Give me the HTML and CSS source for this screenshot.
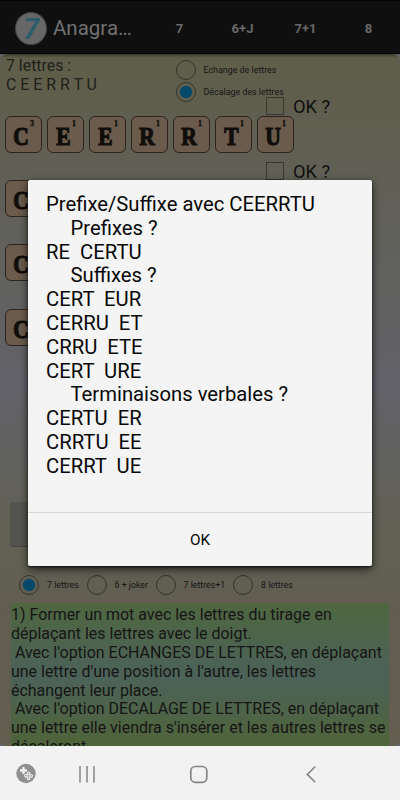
FILE: index.html
```html
<!DOCTYPE html>
<html lang="fr">
<head>
<meta charset="utf-8">
<title>Anagrammes</title>
<link rel="stylesheet" href="styles.css">
</head>
<body>
<div class="screen">
  <header class="bar">
    <div class="logo">7</div>
    <h1 class="title">Anagra…</h1>
    <nav class="menu"><span>7</span><span>6+J</span><span>7+1</span><span>8</span></nav>
  </header>
  <main class="game">
    <section class="top">
      <div class="draw"><div>7 lettres :</div><div class="letters">C E E R R T U</div></div>
      <div class="modes">
        <div class="option"><i class="radio"></i><span>Echange de lettres</span></div>
        <div class="option"><i class="radio on"></i><span>Décalage des lettres</span></div>
      </div>
    </section>
    <section class="row">
      <div class="check"><i class="box"></i><span>OK ?</span></div>
      <div class="tiles">
        <div class="tile"><b>C</b><sup>3</sup></div><div class="tile"><b>E</b><sup>1</sup></div><div class="tile"><b>E</b><sup>1</sup></div><div class="tile"><b>R</b><sup>1</sup></div><div class="tile"><b>R</b><sup>1</sup></div><div class="tile"><b>T</b><sup>1</sup></div><div class="tile"><b>U</b><sup>1</sup></div>
      </div>
    </section>
    <section class="row">
      <div class="check"><i class="box"></i><span>OK ?</span></div>
      <div class="tiles"><div class="tile"><b>C</b></div></div>
    </section>
    <section class="row"><div class="check"></div><div class="tiles"><div class="tile"><b>C</b></div></div></section>
    <section class="row"><div class="check"></div><div class="tiles"><div class="tile"><b>C</b></div></div></section>
    <div class="button"></div>
    <div class="counts">
      <div class="count"><i class="radio on"></i><span>7 lettres</span></div>
      <div class="count"><i class="radio"></i><span>6 + joker</span></div>
      <div class="count"><i class="radio"></i><span>7 lettres+1</span></div>
      <div class="count"><i class="radio"></i><span>8 lettres</span></div>
    </div>
    <div class="help">1) Former un mot avec les lettres du tirage en
déplaçant les lettres avec le doigt.
 Avec l'option ECHANGES DE LETTRES, en déplaçant
une lettre d'une position à l'autre, les lettres
échangent leur place.
 Avec l'option DECALAGE DE LETTRES, en déplaçant
une lettre elle viendra s'insérer et les autres lettres se
décaleront.</div>
  </main>
  <footer class="nav">
    <svg width="400" height="54" viewBox="0 0 400 54">
      <circle cx="26" cy="27.500" r="9.700" fill="#909090"/>
      <path d="M23.500 21v7M20 24.500h7" stroke="#f2f2f2" stroke-width="2.300"/>
      <g fill="none" stroke="#f2f2f2" stroke-width="1.100"><circle cx="28.600" cy="27.300" r="1.300"/><circle cx="31.200" cy="29.800" r="1.300"/><circle cx="26" cy="29.800" r="1.300"/><circle cx="28.600" cy="32.300" r="1.300"/></g>
      <path d="M80 20v16.500M87 20v16.500M94 20v16.500" stroke="#858585" stroke-width="1.500"/>
      <rect x="190.800" y="20.500" width="16" height="15.800" rx="4.500" fill="none" stroke="#858585" stroke-width="1.700"/>
      <path d="M315.300 20.500l-8 7.900 8 7.900" fill="none" stroke="#858585" stroke-width="1.600"/>
    </svg>
  </footer>
  <div class="dialog">
    <div class="message"><p>Prefixe/Suffixe avec CEERRTU</p><p class="head">Prefixes ?</p><p>RE  CERTU</p><p class="head">Suffixes ?</p><p>CERT  EUR</p><p>CERRU  ET</p><p>CRRU  ETE</p><p>CERT  URE</p><p class="head">Terminaisons verbales ?</p><p>CERTU  ER</p><p>CRRTU  EE</p><p>CERRT  UE</p></div>
    <div class="ok">OK</div>
  </div>
</div>
</body>
</html>
```
FILE: styles.css
```css
* { box-sizing: border-box; }
body { margin: 0; font-family: Roboto, sans-serif; color: #151515; }
p, h1 { margin: 0; }
.screen { position: relative; width: 400px; height: 800px; overflow: hidden; display: flex; flex-direction: column; background: #626268; }
.bar { height: 54px; flex: none; display: flex; align-items: center; padding: 2px 0 0 15px; background: #0f0f0f; border-top: 1px solid #040404; border-bottom: 1px solid #000; }
.logo { flex: none; width: 32px; height: 33px; border-radius: 50%; background: #676767; border: 1px solid #444; color: #2d5c6b; font: italic 700 29px/32px Roboto, sans-serif; text-align: center; }
.title { flex: none; margin-left: 6px; width: 95px; font-size: 20.500px; font-weight: 400; color: #717171; white-space: nowrap; }
.menu { display: flex; color: #686868; font-size: 13px; font-weight: 700; }
.menu span { flex: none; width: 63px; text-align: center; }
.game { height: 692px; flex: none; overflow: hidden; border-radius: 7px; background: linear-gradient(rgba(0,0,0,.35), transparent) 0 0 / 100% 4px no-repeat, linear-gradient(#5f5e49 0, #626269 48%, #626153 70%, #615e51 80%, #625e50 100%); }
.top { height: 43px; display: flex; }
.draw { width: 175.500px; padding: 2px 0 0 6px; font-size: 15.900px; line-height: 19px; color: #20201b; white-space: nowrap; }
.modes { padding-top: 4.500px; }
.option { display: flex; align-items: center; gap: 8px; height: 22px; font-size: 8.900px; white-space: nowrap; }
.option span { padding-top: 1px; }
.radio { display: block; flex: none; width: 20px; height: 20px; border: 1px solid #33332b; border-radius: 50%; }
.radio.on { background: radial-gradient(circle, #07496a 0, #07496a 5.500px, transparent 6.800px); }
.row { height: 64.400px; }
.check { height: 18.500px; padding-left: 266px; display: flex; align-items: center; gap: 9px; font-size: 18.300px; color: #101010; }
.check span { padding-top: 1px; }
.box { width: 18px; height: 18px; border: 1px solid #373730; }
.tiles { display: flex; gap: 5px; padding-left: 5px; }
.tile { display: flex; flex: none; width: 37px; height: 37px; justify-content: center; background: #6a5b4c; border: 1.500px solid #2d2422; border-radius: 6px; font: 700 25px/40px "Liberation Serif", serif; color: #100d0b; -webkit-text-stroke: 1.200px #100d0b; position: relative; padding-right: 4px; }
.tile b { transform: scaleX(.86); }
.tile sup { position: absolute; right: 7px; top: 3px; font-size: 8px; line-height: 8px; -webkit-text-stroke: .300px #100d0b; }
.button { margin: 147.400px 0 0 10px; width: 200px; height: 45px; background: #53534f; border-bottom: 1px solid #444; border-radius: 2px; }
.counts { display: flex; height: 20px; margin: 28.400px 0 0 19px; font-size: 8.800px; }
.count { display: flex; align-items: center; gap: 8px; width: 67.500px; white-space: nowrap; }
.count:nth-child(2) { width: 69px; }
.count:nth-child(3) { width: 77.500px; }
.help { margin: 7.600px 11px 0; height: 143px; padding-top: 3px; font-size: 15.960px; line-height: 18.900px; white-space: pre; background: linear-gradient(#4f6640, #4c6258 48%, #4c6258 52%, #4f6439); }
.nav { height: 54px; background: #f2f2f2; }
.nav svg { display: block; }
.dialog { position: absolute; left: 28px; top: 180px; width: 344px; height: 386px; background: #f4f4f4; border-radius: 2px; box-shadow: 0 3px 9px rgba(0,0,0,.7), 0 1px 2px #222; display: flex; flex-direction: column; }
.message { height: 333px; padding: 13px 18px; font-size: 20.250px; line-height: 23.800px; color: #080808; white-space: pre; border-bottom: 1px solid #d7d7d7; }
.head { padding-left: 24.500px; }
.ok { flex: 1; display: flex; align-items: center; justify-content: center; padding-top: 1px; font-size: 15.300px; color: #080808; }
```
